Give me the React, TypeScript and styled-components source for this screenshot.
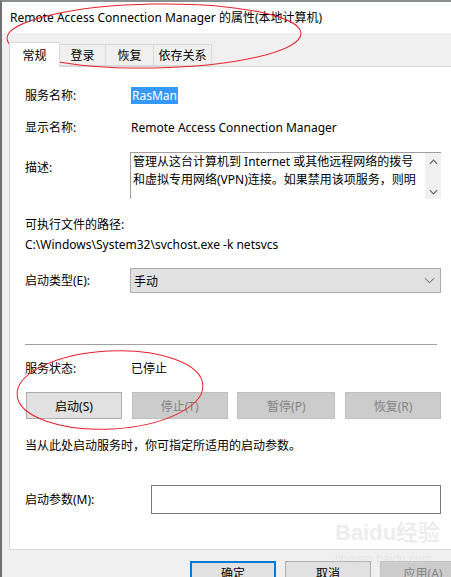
import React from 'react';
import styled, { createGlobalStyle } from 'styled-components';

const GlobalStyle = createGlobalStyle`
  html, body {
    margin: 0;
    padding: 0;
    background: #f0f0f0;
  }
  * {
    box-sizing: border-box;
  }
`

const tabs = [
  { label: '常规', width: 51 },
  { label: '登录', width: 46 },
  { label: '恢复', width: 48 },
  { label: '依存关系', width: 58 },
]

function App() {
  return (
    <>
      <GlobalStyle />
      <Window>
        <TitleBar>Remote Access Connection Manager 的属性(本地计算机)</TitleBar>
        <Body>
          <TabStrip>
            {tabs.map((t, i) => (
              <Tab key={t.label} $active={i === 0} $width={t.width}>{t.label}</Tab>
            ))}
          </TabStrip>
          <Panel>
            <Content>
              <Row>
                <Label>服务名称:</Label>
                <Selected>RasMan</Selected>
              </Row>
              <Row $top={15}>
                <Label>显示名称:</Label>
                <Value>Remote Access Connection Manager</Value>
              </Row>
              <Row $top={16} $align="start">
                <Label $pad={7}>描述:</Label>
                <TextArea>
                  <AreaText>管理从这台计算机到 Internet 或其他远程网络的拨号和虚拟专用网络(VPN)连接。如果禁用该项服务，则明</AreaText>
                  <ScrollBar>
                    <Arrow viewBox="0 0 10 6"><polyline points="1,5 5,1 9,5" /></Arrow>
                    <Arrow viewBox="0 0 10 6"><polyline points="1,1 5,5 9,1" /></Arrow>
                  </ScrollBar>
                </TextArea>
              </Row>
              <PlainText $top={17}>可执行文件的路径:</PlainText>
              <PlainText $top={3}>C:\Windows\System32\svchost.exe -k netsvcs</PlainText>
              <Row $top={15}>
                <Label>启动类型(E):</Label>
                <Select>
                  <span>手动</span>
                  <Chevron viewBox="0 0 12 7"><polyline points="1,1 6,6 11,1" /></Chevron>
                </Select>
              </Row>
              <Separator />
              <Row $top={15}>
                <Label>服务状态:</Label>
                <Value>已停止</Value>
              </Row>
              <ButtonRow>
                <Button>启动(S)</Button>
                <Button disabled>停止(T)</Button>
                <Button disabled $width={98}>暂停(P)</Button>
                <Button disabled>恢复(R)</Button>
              </ButtonRow>
              <PlainText $top={18}>当从此处启动服务时，你可指定所适用的启动参数。</PlainText>
              <ParamRow>
                <Label $width={126}>启动参数(M):</Label>
                <Input />
              </ParamRow>
            </Content>
          </Panel>
          <DialogButtons>
            <Button $primary $width={86}>确定</Button>
            <Button $width={86}>取消</Button>
            <Button disabled $width={86}>应用(A)</Button>
          </DialogButtons>
        </Body>
        <Watermark>
          <WatermarkLogo>Baidu经验</WatermarkLogo>
          <WatermarkUrl>jingyan.baidu.com</WatermarkUrl>
        </Watermark>
        <Marks viewBox="0 0 451 577">
          <ellipse cx="154" cy="36" rx="147" ry="32" transform="rotate(-1 154 36)" />
          <ellipse cx="110" cy="390" rx="93" ry="39" transform="rotate(-3 110 390)" />
        </Marks>
      </Window>
    </>
  );
}

const Window = styled.div`
  position: relative;
  width: 451px;
  height: 577px;
  overflow: hidden;
  background: #f0f0f0;
  border-left: 2px solid #707070;
  border-top: 2px solid #8a9090;
  font-family: "Noto Sans", "Noto Sans CJK SC", sans-serif;
  font-size: 12px;
  color: #000;
`

const TitleBar = styled.div`
  height: 31px;
  background: #fff;
  padding: 0 0 2px 8px;
  display: flex;
  align-items: center;
  font-size: 12px;
  color: #000;
  white-space: nowrap;
`

const Body = styled.div`
  padding-top: 9px;
`

const TabStrip = styled.div`
  display: flex;
  align-items: flex-end;
  padding-left: 7px;
  height: 24px;
`

const Tab = styled.div<{ $active?: boolean; $width: number }>`
  width: ${p => p.$width}px;
  height: ${p => (p.$active ? 25 : 22)}px;
  margin-bottom: ${p => (p.$active ? -1 : 0)}px;
  background: ${p => (p.$active ? '#fff' : '#f0f0f0')};
  border: 1px solid #d9d9d9;
  border-bottom: ${p => (p.$active ? 'none' : '1px solid #d9d9d9')};
  border-left: ${p => (p.$active ? '1px solid #d9d9d9' : 'none')};
  display: flex;
  align-items: center;
  justify-content: center;
  position: relative;
  z-index: ${p => (p.$active ? 1 : 0)};
  white-space: nowrap;
`

const Panel = styled.div`
  margin-left: 7px;
  width: 460px;
  height: 484px;
  background: #fff;
  border: 1px solid #d9d9d9;
  padding: 20px 0 0 15px;
`

const Content = styled.div`
  width: 416px;
  display: flex;
  flex-direction: column;
`

const Row = styled.div<{ $top?: number; $align?: string }>`
  display: flex;
  align-items: ${p => (p.$align === 'start' ? 'flex-start' : 'center')};
  margin-top: ${p => p.$top ?? 0}px;
`

const Label = styled.div<{ $width?: number; $pad?: number }>`
  width: ${p => p.$width ?? 105}px;
  flex-shrink: 0;
  line-height: 17px;
  padding-top: ${p => p.$pad ?? 0}px;
  white-space: nowrap;
`

const Value = styled.div`
  line-height: 17px;
  padding-left: 1px;
  white-space: nowrap;
`

const Selected = styled.span`
  background: #3399ff;
  color: #fff;
  line-height: 17px;
  padding: 0 1px;
  margin-left: 1px;
`

const PlainText = styled.div<{ $top?: number }>`
  line-height: 17px;
  margin-top: ${p => p.$top ?? 0}px;
  white-space: nowrap;
`

const TextArea = styled.div`
  width: 311px;
  height: 47px;
  border: 1px solid #a0a0a0;
  border-right: none;
  border-bottom: none;
  display: flex;
  overflow: hidden;
`

const AreaText = styled.div`
  flex: 1;
  padding: 0 2px;
  line-height: 18px;
  font-size: 12px;
`

const ScrollBar = styled.div`
  width: 16px;
  background: #f0f0f0;
  display: flex;
  flex-direction: column;
  justify-content: space-between;
  align-items: center;
  padding: 6px 0 4px;
`

const Arrow = styled.svg`
  width: 9px;
  height: 6px;
  fill: none;
  stroke: #606060;
  stroke-width: 1.3;
`

const Select = styled.div`
  width: 311px;
  height: 25px;
  background: #e1e1e1;
  border: 1px solid #adadad;
  display: flex;
  align-items: center;
  justify-content: space-between;
  padding: 0 5px 0 3px;
`

const Chevron = styled.svg`
  width: 11px;
  height: 7px;
  fill: none;
  stroke: #505050;
  stroke-width: 1;
`

const Separator = styled.div`
  height: 1px;
  background: #a0a0a0;
  margin-top: 51px;
  width: 412px;
`

const ButtonRow = styled.div`
  display: flex;
  justify-content: space-between;
  margin-top: 15px;
  padding-left: 1px;
`

const Button = styled.button<{ $width?: number; $primary?: boolean }>`
  width: ${p => p.$width ?? 96}px;
  height: 27px;
  flex-shrink: 0;
  font-family: inherit;
  font-size: 12px;
  color: #000;
  background: #e1e1e1;
  border: 1px solid #adadad;
  padding: 0;
  ${p => p.$primary && 'border: 2px solid #0078d7;'}

  &:disabled {
    background: #cccccc;
    border-color: #bfbfbf;
    color: #838383;
  }
`

const ParamRow = styled.div`
  display: flex;
  align-items: center;
  margin-top: 31px;
`

const Input = styled.div`
  width: 291px;
  height: 29px;
  border: 1px solid #7a7a7a;
  background: #fff;
`

const DialogButtons = styled.div`
  display: flex;
  gap: 9px;
  padding: 11px 0 0 188px;

  ${Button} {
    height: 24px;
  }
`

const Watermark = styled.div`
  position: absolute;
  left: 333px;
  top: 518px;
  display: flex;
  flex-direction: column;
  pointer-events: none;
`

const WatermarkLogo = styled.div`
  font-family: "Liberation Sans", "Noto Sans CJK SC", sans-serif;
  font-size: 22px;
  font-weight: bold;
  color: rgba(220, 220, 220, 0.5);
  line-height: 26px;
`

const WatermarkUrl = styled.div`
  font-family: "Liberation Sans", sans-serif;
  font-size: 12px;
  color: rgba(220, 220, 220, 0.5);
  margin-top: 6px;
`

const Marks = styled.svg`
  position: absolute;
  left: -2px;
  top: -2px;
  width: 451px;
  height: 577px;
  pointer-events: none;
  fill: none;
  stroke: #e8212b;
  stroke-width: 1;
`

export default App;
